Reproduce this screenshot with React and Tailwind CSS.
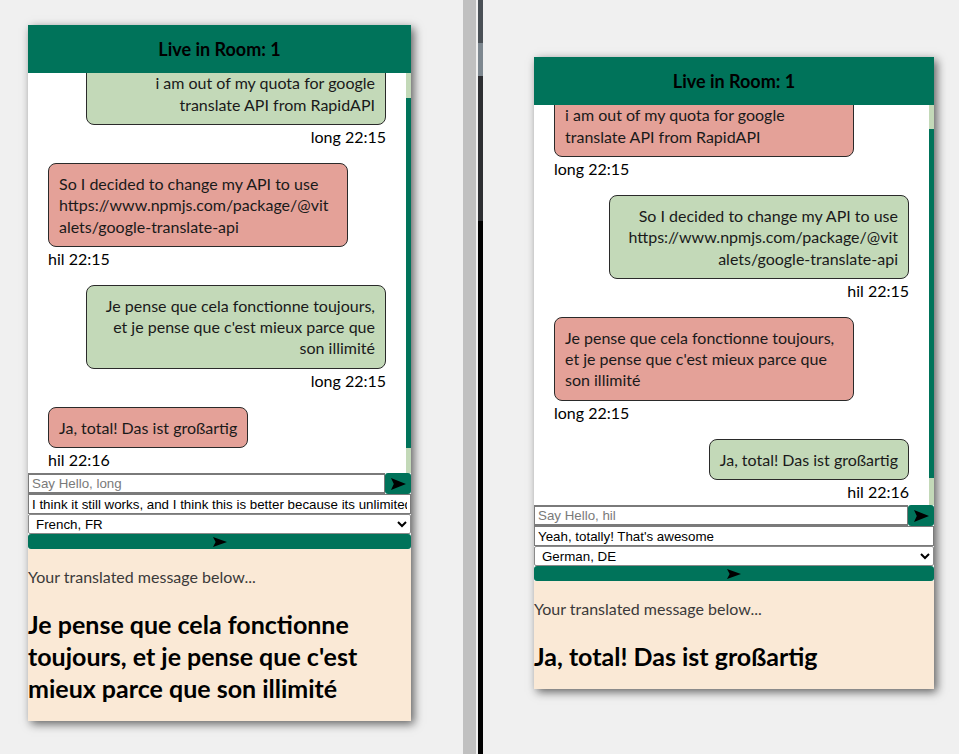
import React from 'react';

const GREEN = 'bg-[#00735a]';

const leftMessages = [
  { mine: true, name: 'long', time: '22:15', lines: ['i am out of my quota for google', 'translate API from RapidAPI'] },
  { mine: false, name: 'hil', time: '22:15', lines: ['So I decided to change my API to use', 'https://www.npmjs.com/package/@vit', 'alets/google-translate-api'] },
  { mine: true, name: 'long', time: '22:15', lines: ['Je pense que cela fonctionne toujours,', "et je pense que c'est mieux parce que", 'son illimité'] },
  { mine: false, name: 'hil', time: '22:16', lines: ['Ja, total! Das ist großartig'] },
];

const rightMessages = [
  { mine: false, name: 'long', time: '22:15', lines: ['i am out of my quota for google', 'translate API from RapidAPI'] },
  { mine: true, name: 'hil', time: '22:15', lines: ['So I decided to change my API to use', 'https://www.npmjs.com/package/@vit', 'alets/google-translate-api'] },
  { mine: false, name: 'long', time: '22:15', lines: ['Je pense que cela fonctionne toujours,', "et je pense que c'est mieux parce que", 'son illimité'] },
  { mine: true, name: 'hil', time: '22:16', lines: ['Ja, total! Das ist großartig'] },
];

// the ➤ send glyph
function Arrow({ className }) {
  return (
    <svg className={className} viewBox="0 0 15 11" preserveAspectRatio="none" fill="currentColor">
      <path d="M0 0 L15 5.5 L0 11 L2.8 5.5 Z" />
    </svg>
  );
}

function Message({ msg }) {
  const wide = msg.lines.length > 1;
  return (
    <div className={`mt-[14px] flex flex-col ${msg.mine ? 'items-end' : 'items-start'}`}>
      <div
        className={`rounded-[8px] border border-[#2a2a2a] px-[10px] py-[9px] leading-[21.3px] text-[#1a1a1a] ${
          msg.mine ? 'bg-[#c3d9b8] text-right' : 'bg-[#e4a198] text-left'
        } ${wide ? 'w-[300px]' : 'w-fit'}`}
      >
        {msg.lines.map((line, i) => (
          <div key={i} className="whitespace-nowrap">{line}</div>
        ))}
      </div>
      <div className="leading-[24px] text-black">
        {msg.name} {msg.time}
      </div>
    </div>
  );
}

function ChatWindow({ width, user, messages, draft, language, translated, thumb }) {
  return (
    <div
      className="flex flex-col bg-white font-['Lato',sans-serif] text-[16px] shadow-[3px_3px_9px_rgba(0,0,0,0.6)]"
      style={{ width }}
    >
      {/* Header */}
      <div className={`flex h-[48px] items-center justify-center ${GREEN}`}>
        <h3 className="text-[18px] font-bold text-black">Live in Room: 1</h3>
      </div>

      {/* Messages + scrollbar */}
      <div className="flex h-[400px]">
        <div className="flex flex-1 flex-col justify-end overflow-hidden px-[20px] pb-[1px]">
          {messages.map((m, i) => (
            <Message key={i} msg={m} />
          ))}
        </div>
        <div className="flex w-[5px] flex-col">
          <div className="bg-[#c3d9b8]" style={{ height: thumb[0] }} />
          <div className={GREEN} style={{ height: thumb[1] }} />
          <div className="flex-1 bg-[#c3d9b8]" />
        </div>
      </div>

      {/* Inputs */}
      <div className="flex h-[21px] font-['Liberation_Sans',sans-serif] text-[13.33px]">
        <input
          placeholder={`Say Hello, ${user}`}
          className="min-w-0 flex-1 border border-y-2 border-[#7a7a7a] bg-white px-[3px] text-black outline-none placeholder:text-[#7a7a7a]"
        />
        <button className={`flex w-[26px] items-center justify-center rounded-[3px] ${GREEN}`}>
          <Arrow className="h-[12px] w-[15px] text-black" />
        </button>
      </div>
      <input
        readOnly
        value={draft}
        className="block h-[20px] w-full border border-[#7a7a7a] bg-white px-[3px] font-['Liberation_Sans',sans-serif] text-[13.33px] text-black outline-none"
      />
      <select
        defaultValue={language}
        className="block h-[20px] w-full rounded-[2px] border border-[#8a8a8a] bg-white pl-[3px] font-['Liberation_Sans',sans-serif] text-[13.33px] text-black outline-none"
      >
        <option>{language}</option>
      </select>
      <button className={`flex h-[15px] w-full items-center justify-center rounded-[3px] ${GREEN}`}>
        <Arrow className="h-[10px] w-[14px] text-black" />
      </button>

      {/* Translation output */}
      <div className="bg-[#fae9d6] pt-[17px] pb-[17px]">
        <p className="leading-[21px] text-[#3a3a3a]">Your translated message below...</p>
        <h2 className="mt-[21px] text-[25px] font-bold leading-[32px] text-black">
          {translated.map((line, i) => (
            <div key={i} className="whitespace-nowrap">{line}</div>
          ))}
        </h2>
      </div>
    </div>
  );
}

export default function App() {
  return (
    <div className="flex h-[754px] w-[959px] overflow-hidden bg-[#f0f0f0]">
      <div className="w-[463px] shrink-0 pl-[28px] pt-[25px]">
        <ChatWindow
          width={383}
          user="long"
          messages={leftMessages}
          draft="I think it still works, and I think this is better because its unlimited"
          language="French, FR"
          translated={['Je pense que cela fonctionne', "toujours, et je pense que c'est", 'mieux parce que son illimité']}
          thumb={[25, 350]}
        />
      </div>

      {/* window divider */}
      <div className="w-[13px] shrink-0 bg-[#c0c0c0]" />
      <div className="w-[2px] shrink-0 bg-[#f0f0f0]" />
      <div className="flex w-[5px] shrink-0 flex-col">
        <div className="h-[43px] bg-[#4a5056]" />
        <div className="h-[33px] bg-[#7d878f]" />
        <div className="h-[145px] bg-[#2d2e32]" />
        <div className="flex-1 bg-black" />
      </div>

      <div className="flex-1 pl-[51px] pt-[57px]">
        <ChatWindow
          width={400}
          user="hil"
          messages={rightMessages}
          draft="Yeah, totally! That's awesome"
          language="German, DE"
          translated={['Ja, total! Das ist großartig']}
          thumb={[24, 349]}
        />
      </div>
    </div>
  );
}
